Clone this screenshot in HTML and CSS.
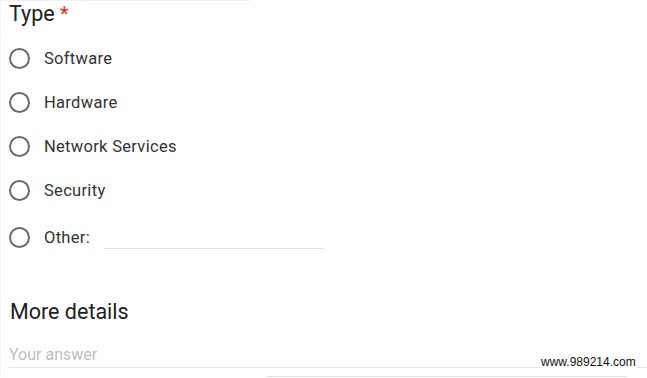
FILE: index.html
```html
<!DOCTYPE html>
<html>
<head>
<meta charset="utf-8">
<link rel="stylesheet" href="styles.css">
</head>
<body>
<div class="topline"></div>
<div class="card">
  <div class="question">
    <div class="title">Type <span class="req">*</span></div>
    <div class="options">
      <label class="opt"><span class="radio"></span><span class="lbl">Software</span></label>
      <label class="opt"><span class="radio"></span><span class="lbl">Hardware</span></label>
      <label class="opt"><span class="radio"></span><span class="lbl">Network Services</span></label>
      <label class="opt"><span class="radio"></span><span class="lbl">Security</span></label>
      <label class="opt opt-other"><span class="radio"></span><span class="lbl">Other:</span><span class="other-line"></span></label>
    </div>
  </div>
  <div class="question q2">
    <div class="title title2">More details</div>
    <div class="answer">Your answer</div>
    <div class="next-line"></div>
  </div>
</div>
<div class="watermark">www.989214.com</div>
</body>
</html>
```
FILE: styles.css
```css
html, body {
  margin: 0;
  padding: 0;
  background: #ffffff;
}
body {
  width: 647px;
  height: 378px;
  overflow: hidden;
  position: relative;
  font-family: Roboto, "Liberation Sans", Arial, sans-serif;
}
.topline {
  width: 250px;
  height: 1px;
  background: #f0f0f0;
}
.card {
  display: flex;
  flex-direction: column;
  border-left: 1px solid #f3f3f3;
}
.question {
  display: flex;
  flex-direction: column;
  padding-left: 8px;
}
.title {
  font-size: 21.5px;
  line-height: 26px;
  color: #202124;
  height: 35px;
}
.req {
  color: #d93025;
  font-size: 20px;
}
.options {
  display: flex;
  flex-direction: column;
}
.opt {
  display: flex;
  align-items: center;
  height: 44px;
}
.opt-other {
  margin-top: 3px;
}
.radio {
  width: 17px;
  height: 17px;
  border: 2px solid #6a6a6a;
  border-radius: 50%;
  flex: none;
}
.lbl {
  margin-left: 14px;
  font-size: 16.5px;
  color: #333333;
  letter-spacing: 0.3px;
}
.other-line {
  width: 220px;
  height: 1px;
  background: #e2e2e2;
  margin-left: 14px;
  align-self: flex-end;
  margin-bottom: 10px;
}
.q2 {
  padding-top: 40px;
  padding-left: 9px;
}
.title2 {
  height: 46px;
}
.answer {
  font-size: 16px;
  color: #c0c0c0;
  line-height: 20px;
  padding-bottom: 2px;
  border-bottom: 1px solid #e6e6e6;
  margin-left: -1px;
}
.next-line {
  margin-left: 257px;
  margin-top: 8px;
  width: 360px;
  height: 1px;
  background: #e2e2e2;
}
.watermark {
  position: absolute;
  left: 540px;
  top: 355px;
  font-family: "Liberation Sans", Arial, sans-serif;
  font-size: 12px;
  color: #111111;
  background: #ffffff;
  padding: 0 1px;
}
```
